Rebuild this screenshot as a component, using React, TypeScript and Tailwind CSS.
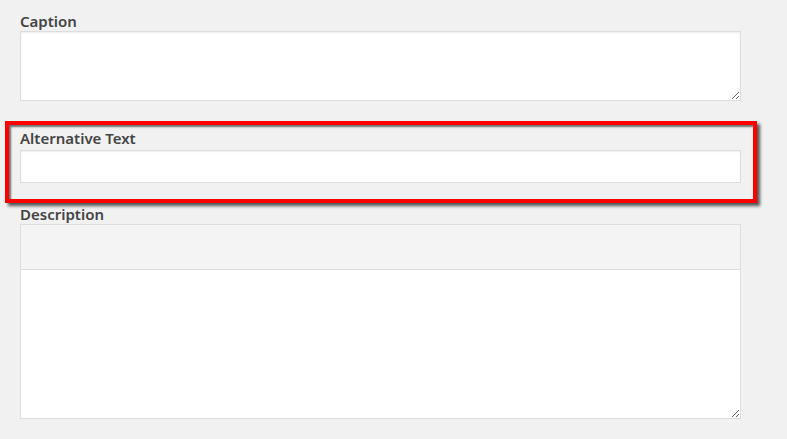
import React from 'react';

const labelClass =
  'block h-[20px] text-[15px] leading-[20px] font-semibold text-[#444]';

const fieldClass =
  'block w-full bg-white border border-[#dddddd] shadow-[inset_0_1px_2px_rgba(0,0,0,0.07)] outline-none';

export default function App() {
  return (
    <div
      className="min-h-[439px] w-full bg-[#f1f1f1] pt-[11px] pl-[20px] pr-[46px]"
      style={{ fontFamily: '"Noto Sans", "Open Sans", Arial, sans-serif' }}
    >
      <div className="w-[721px]">
        {/* Caption */}
        <label className={labelClass}>Caption</label>
        <textarea className={`${fieldClass} h-[70px]`} />

        {/* Alternative Text (highlighted) */}
        <div className="mt-[20px] -ml-[15px] -mr-[16px] border-4 border-[#ff0000] pt-[3px] pb-[16px] pl-[11px] pr-[12px] shadow-[3px_3px_3px_rgba(0,0,0,0.65),inset_2px_2px_2px_rgba(0,0,0,0.55)]">
          <label className={labelClass}>Alternative Text</label>
          <input type="text" className={`${fieldClass} mt-[2px] h-[33px]`} />
        </div>

        {/* Description */}
        <label className={`${labelClass} mt-[1px]`}>Description</label>
        <div className="border border-[#dddddd]">
          <div className="h-[45px] bg-[#f4f4f4] border-b border-[#dddddd]" />
          <textarea className="block w-full h-[148px] bg-white outline-none" />
        </div>
      </div>
    </div>
  );
}
